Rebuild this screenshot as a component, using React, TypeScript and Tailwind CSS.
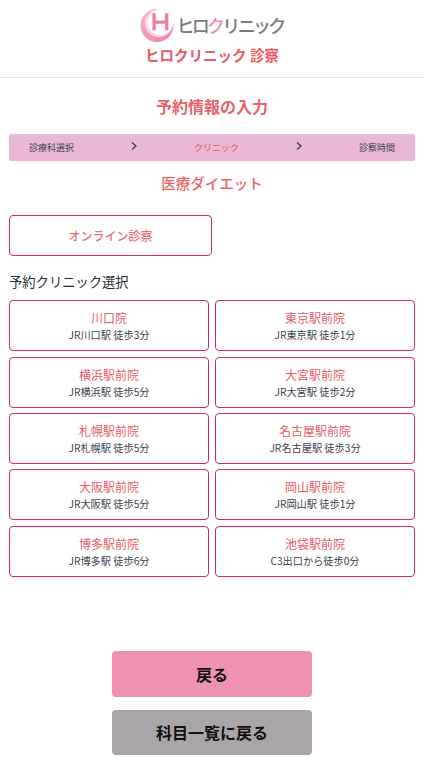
const F = "font-['Noto_Sans_CJK_JP','Noto_Sans',sans-serif]";

const clinics = [
  ["川口院", "JR川口駅 徒歩3分"],
  ["東京駅前院", "JR東京駅 徒歩1分"],
  ["横浜駅前院", "JR横浜駅 徒歩5分"],
  ["大宮駅前院", "JR大宮駅 徒歩2分"],
  ["札幌駅前院", "JR札幌駅 徒歩5分"],
  ["名古屋駅前院", "JR名古屋駅 徒歩3分"],
  ["大阪駅前院", "JR大阪駅 徒歩5分"],
  ["岡山駅前院", "JR岡山駅 徒歩1分"],
  ["博多駅前院", "JR博多駅 徒歩6分"],
  ["池袋駅前院", "C3出口から徒歩0分"],
];

function Chevron() {
  return (
    <svg width="6" height="10" viewBox="0 0 6 10" fill="none" stroke="#374151" strokeWidth="1.5" className="mb-[3px]">
      <path d="M1 1.5 L5 5 L1 8.5" />
    </svg>
  );
}

function Logo() {
  return (
    <div className="flex items-center h-[36px]">
      <svg width="35" height="35" viewBox="0 0 36 36" className="shrink-0">
        <defs>
          <linearGradient id="m" x1="0" y1="0" x2="1" y2="1">
            <stop offset="0" stopColor="#f7b5cb" />
            <stop offset="1" stopColor="#ee80a4" />
          </linearGradient>
        </defs>
        <circle cx="17.5" cy="18" r="17" fill="url(#m)" />
        <circle cx="19.5" cy="15.5" r="14.5" fill="#fbd5e1" />
        <circle cx="21" cy="14.5" r="13.2" fill="#fff" />
        <path d="M14.5 5.5 V23 M27.5 5.5 V23 M14.5 14.5 H27.5" stroke="#ec7ea0" strokeWidth="3.4" fill="none" />
      </svg>
      <span className="ml-[1px] text-[18px] leading-none tracking-[-2.7px] text-[#7b7b7b] font-medium">
        ヒロ<span className="text-[#ef8fb0]">ク</span>リニック
      </span>
    </div>
  );
}

export default function App() {
  return (
    <div className="w-[428px] h-[762px] bg-white overflow-hidden">
      <div className={`${F} w-[424px] h-[762px] flex flex-col`}>
        <header className="h-[78px] border-b border-[#e5e5e5] flex flex-col items-center pt-[7px]">
          <Logo />
          <h1 className="text-[14.5px] leading-[24px] font-bold text-[#ea5a64]">ヒロクリニック 診察</h1>
        </header>

        <h2 className="mt-[16px] text-center text-[16px] leading-[24px] font-bold text-[#e9626b]">予約情報の入力</h2>

        <div className="mx-[9px] mt-[16px] h-[27px] rounded-[2px] bg-[#eab8d6] flex items-center justify-between px-[20px] text-[9px] text-[#374151]">
          <span className="whitespace-nowrap">診療科選択</span>
          <Chevron />
          <span className="whitespace-nowrap font-medium text-[#e9626b]">クリニック</span>
          <Chevron />
          <span className="whitespace-nowrap">診察時間</span>
        </div>

        <h3 className="mt-[10px] text-center text-[14.5px] leading-[24px] font-medium text-[#e9626b]">医療ダイエット</h3>

        <div className="mx-[9px] mt-[20px] w-[203px] h-[41px] rounded-[4px] border border-[#c92c68] flex items-center justify-center text-[12px] font-medium text-[#e9707a]">
          オンライン診察
        </div>

        <p className="mx-[9px] mt-[16px] text-[13.3px] leading-[20px] text-[#1f2937]">予約クリニック選択</p>

        <div className="mx-[9px] mt-[8.3px] grid grid-cols-2 gap-x-[6px] gap-y-[5.4px]">
          {clinics.map(([name, access]) => (
            <div
              key={name}
              className="h-[51px] rounded-[4px] border border-[#c92c68] flex flex-col items-center justify-center"
            >
              <span className="text-[12px] leading-[18px] text-[#ea5a64]">{name}</span>
              <span className="text-[10.2px] leading-[15px] text-[#374151]">{access}</span>
            </div>
          ))}
        </div>

        <div className="mt-[74px] flex flex-col items-center gap-[13px]">
          <button className="w-[200px] h-[46px] rounded-[4px] bg-[#ee91b2] text-[16px] font-bold text-[#111111]">戻る</button>
          <button className="w-[200px] h-[45px] rounded-[4px] bg-[#aca5a7] text-[16px] font-bold text-[#111111]">科目一覧に戻る</button>
        </div>
      </div>
    </div>
  );
}
